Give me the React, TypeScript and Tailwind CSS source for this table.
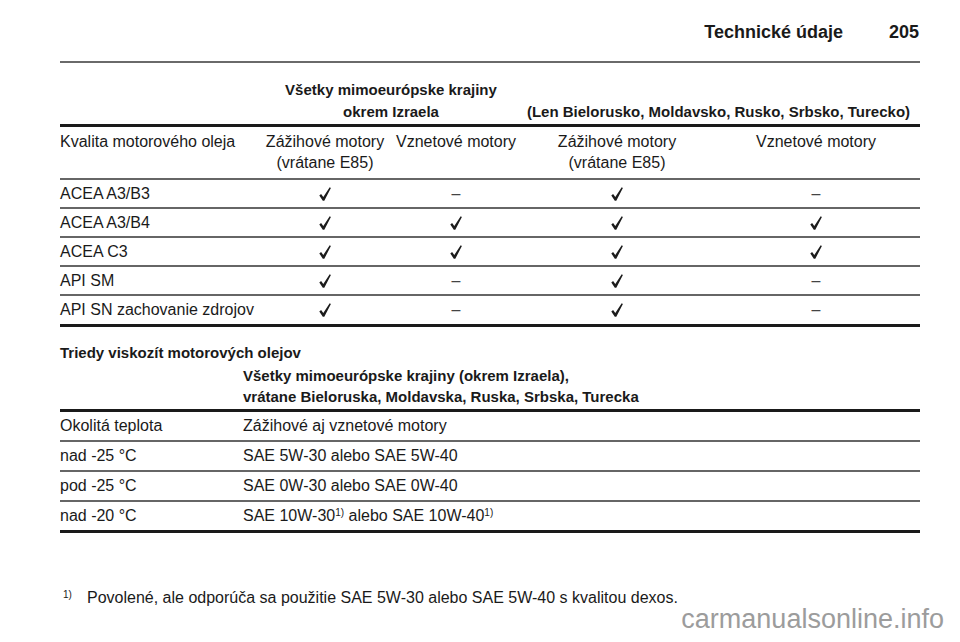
const Check = () => (
  <svg width="12" height="14" viewBox="0 0 12 14" className="inline-block">
    <path d="M0.3 8.4 L2.1 7.1 L4.3 9.9 L10.7 0.3 L11.9 1.1 L5.3 13.7 L3.8 13.7 Z" fill="#1c1c1c" />
  </svg>
);

const Dash = () => <span className="text-[#444]">–</span>;

type Mark = 'y' | 'n';

const qualityRows: { label: string; marks: Mark[] }[] = [
  { label: 'ACEA A3/B3', marks: ['y', 'n', 'y', 'n'] },
  { label: 'ACEA A3/B4', marks: ['y', 'y', 'y', 'y'] },
  { label: 'ACEA C3', marks: ['y', 'y', 'y', 'y'] },
  { label: 'API SM', marks: ['y', 'n', 'y', 'n'] },
  { label: 'API SN zachovanie zdrojov', marks: ['y', 'n', 'y', 'n'] },
];

const Sup = () => <sup className="text-[10px] leading-none">1)</sup>;

const viscosityRows: { temp: string; value: React.ReactNode }[] = [
  { temp: 'Okolitá teplota', value: 'Zážihové aj vznetové motory' },
  { temp: 'nad -25 °C', value: 'SAE 5W-30 alebo SAE 5W-40' },
  { temp: 'pod -25 °C', value: 'SAE 0W-30 alebo SAE 0W-40' },
  {
    temp: 'nad -20 °C',
    value: (
      <>
        SAE 10W-30
        <Sup /> alebo SAE 10W-40
        <Sup />
      </>
    ),
  },
];

const cols = 'grid grid-cols-[200px_130px_132px_190px_208px]';

export default function App() {
  return (
    <div
      className="relative h-[642px] w-[960px] overflow-hidden bg-white pl-[60px] pr-[40px] text-[#1a1a1a]"
      style={{ fontFamily: "'Liberation Sans', Arial, sans-serif" }}
    >
      {/* Page header */}
      <div className="flex justify-end gap-[46px] pt-[21px] pb-[18px] text-[18px] font-bold leading-[22px]">
        <span>Technické údaje</span>
        <span className="pr-px">205</span>
      </div>
      <div className="h-[1.5px] bg-[#6a6a6a]" />

      {/* Engine oil quality table */}
      <div className={`${cols} mt-[16.5px] border-b-[3px] border-[#1a1a1a] pb-px text-[15px] font-bold leading-[22px]`}>
        <div />
        <div className="col-span-2 text-center">
          Všetky mimoeurópske krajiny
          <br />
          okrem Izraela
        </div>
        <div className="col-span-2 flex items-end justify-center pl-px pr-[6px]">
          (Len Bielorusko, Moldavsko, Rusko, Srbsko, Turecko)
        </div>
      </div>

      <div className={`${cols} border-b-2 border-[#666] pt-[4px] pb-[5px] text-[16px] leading-[21px]`}>
        <div>Kvalita motorového oleja</div>
        <div className="text-center">
          Zážihové motory
          <br />
          (vrátane E85)
        </div>
        <div className="text-center">Vznetové motory</div>
        <div className="text-center">
          Zážihové motory
          <br />
          (vrátane E85)
        </div>
        <div className="text-center">Vznetové motory</div>
      </div>

      {qualityRows.map((row, i) => {
        const last = i === qualityRows.length - 1;
        return (
          <div
            key={row.label}
            className={`${cols} items-center text-[16px] leading-[20px] ${
              last ? 'h-[31px] border-b-[3px] border-[#1a1a1a]' : 'h-[29px] border-b-2 border-[#666]'
            }`}
          >
            <div>{row.label}</div>
            {row.marks.map((m, j) => (
              <div key={j} className="flex justify-center">
                {m === 'y' ? <Check /> : <Dash />}
              </div>
            ))}
          </div>
        );
      })}

      {/* Viscosity grades */}
      <div className="mt-[15px] text-[15px] font-bold leading-[22px]">Triedy viskozít motorových olejov</div>
      <div className="grid grid-cols-[183px_1fr] border-b-[3px] border-[#1a1a1a] pt-px pb-[1.5px] text-[15px] font-bold leading-[21px]">
        <div />
        <div>
          Všetky mimoeurópske krajiny (okrem Izraela),
          <br />
          vrátane Bieloruska, Moldavska, Ruska, Srbska, Turecka
        </div>
      </div>
      {viscosityRows.map((row, i) => {
        const last = i === viscosityRows.length - 1;
        return (
          <div
            key={row.temp}
            className={`grid grid-cols-[183px_1fr] items-center text-[16px] leading-[20px] ${
              last ? 'h-[31px] border-b-[3px] border-[#1a1a1a]' : 'h-[30px] border-b-2 border-[#666]'
            }`}
          >
            <div>{row.temp}</div>
            <div>{row.value}</div>
          </div>
        );
      })}

      {/* Footnote */}
      <div className="mt-[55px] flex text-[16px] leading-[20px]">
        <span className="w-[27px] pl-[3px] text-[10px] leading-[14px]">1)</span>
        <span>Povolené, ale odporúča sa použitie SAE 5W-30 alebo SAE 5W-40 s kvalitou dexos.</span>
      </div>

      {/* Watermark */}
      <div className="absolute right-[16px] top-[604px] text-[27px] leading-[30px] text-[#9c9c9c]">
        carmanualsonline.info
      </div>
    </div>
  );
}
